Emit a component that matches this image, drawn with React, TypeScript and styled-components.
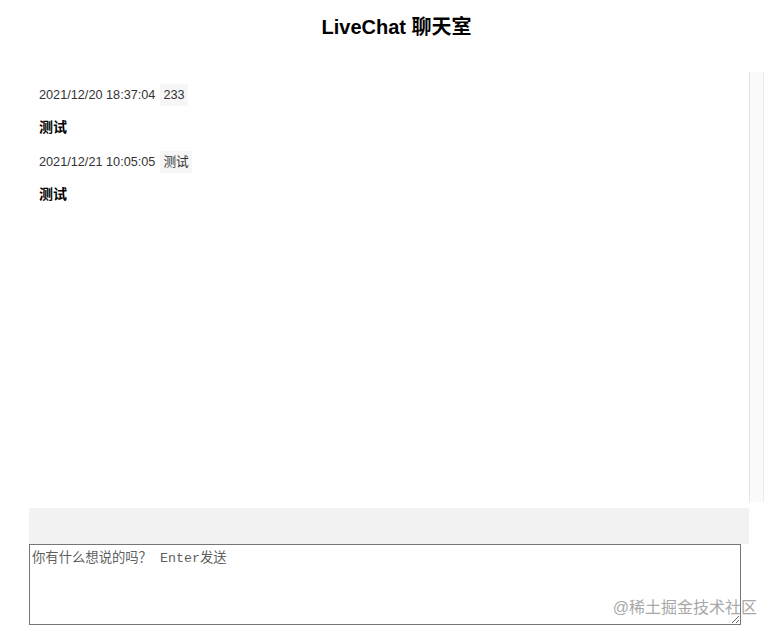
import React from "react";
import styled, { createGlobalStyle } from "styled-components";

const Global = createGlobalStyle`
  html, body { margin: 0; padding: 0; background: #fff; }
  body { font-family: "Liberation Sans", "Noto Sans CJK SC", sans-serif; color: #000; }
`;

const Page = styled.div`
  position: relative;
  width: 775px;
  height: 634px;
  overflow: hidden;
`;

const Container = styled.div`
  width: 735px;
  margin-left: 29px;
  display: flex;
  flex-direction: column;
`;

const Title = styled.h1`
  margin: 0;
  height: 72px;
  padding-top: 15px;
  box-sizing: border-box;
  font-size: 20px;
  font-weight: bold;
  text-align: center;
  line-height: 24px;
`;

const ListFrame = styled.div`
  display: flex;
  height: 430px;
`;

const List = styled.div`
  flex: 1;
  overflow-y: auto;
  padding: 10px;
  box-sizing: border-box;
  scrollbar-width: none;
`;

const Track = styled.div`
  width: 15px;
  box-sizing: border-box;
  background: #fafafa;
  border-left: 1px solid #e6e6e6;
  border-right: 1px solid #ededed;
`;

const Message = styled.div`
  display: flex;
  flex-direction: column;
  padding-top: 2px;
  margin-bottom: 12px;
`;

const Meta = styled.div`
  display: flex;
  align-items: center;
  font-size: 12.7px;
  color: #333;
  line-height: 22px;
`;

const Tag = styled.span`
  margin-left: 5px;
  padding: 0 3px;
  background: #f6f6f6;
  font-size: 12.7px;
  color: #333;
`;

const Body = styled.div`
  margin-top: 11px;
  font-size: 14px;
  font-weight: bold;
  line-height: 20px;
`;

const Toolbar = styled.div`
  margin-top: 6px;
  width: 720px;
  height: 36px;
  background: #f2f2f2;
`;

const Input = styled.textarea`
  width: 712px;
  height: 81px;
  box-sizing: border-box;
  margin: 0;
  border: 1px solid #767676;
  padding: 2px;
  font-family: "Liberation Mono", "Noto Sans CJK SC", monospace;
  font-size: 13.33px;
  resize: both;
  &::placeholder { color: #5f5f5f; }
`;

const Watermark = styled.div`
  position: absolute;
  right: 18px;
  bottom: 16px;
  font-size: 16px;
  color: #a8a8a8;
  pointer-events: none;
  font-family: "Liberation Sans", "Noto Sans CJK SC", sans-serif;
`;

const messages = [
  { time: "2021/12/20 18:37:04", user: "233", text: "测试" },
  { time: "2021/12/21 10:05:05", user: "测试", text: "测试" },
];

export default function App() {
  return (
    <Page>
      <Global />
      <Container>
        <Title>LiveChat 聊天室</Title>
        <ListFrame>
          <List>
            {messages.map((m, i) => (
              <Message key={i}>
                <Meta>
                  {m.time}
                  <Tag>{m.user}</Tag>
                </Meta>
                <Body>{m.text}</Body>
              </Message>
            ))}
          </List>
          <Track />
        </ListFrame>
        <Toolbar />
        <Input placeholder="你有什么想说的吗？ Enter发送" />
      </Container>
      <Watermark>@稀土掘金技术社区</Watermark>
    </Page>
  );
}
